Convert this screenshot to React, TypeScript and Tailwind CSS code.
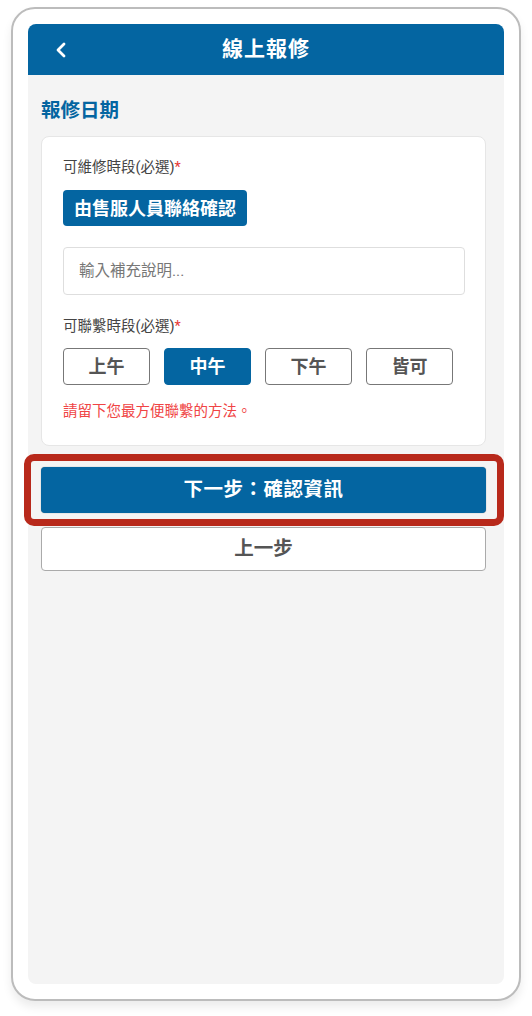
import { useState } from "react";

const slots = ["上午", "中午", "下午", "皆可"];

export default function App() {
  const [slot, setSlot] = useState("中午");

  return (
    <div
      className="min-h-screen bg-white pt-[7px] pl-[11px]"
      style={{ fontFamily: '"Roboto", "Noto Sans CJK TC", sans-serif' }}
    >
      <div className="w-[510px] h-[994px] rounded-[24px] border-2 border-[#bcbcbc] bg-white p-[15px] shadow-[0_6px_10px_rgba(0,0,0,0.08)]">
        <div className="flex h-full flex-col">
          {/* Header */}
          <div className="relative flex h-[51px] shrink-0 items-center justify-center rounded-t-[8px] bg-[#0465a1]">
            <button className="absolute left-[25px] top-[16px] flex h-[20px] w-[16px] items-center justify-center">
              <svg width="12" height="16" viewBox="0 0 12 16" fill="none">
                <polyline
                  points="9,2 3,8 9,14"
                  stroke="white"
                  strokeWidth="2.8"
                  strokeLinecap="round"
                  strokeLinejoin="round"
                />
              </svg>
            </button>
            <h1 className="text-[21px] font-bold tracking-[1px] text-white">線上報修</h1>
          </div>

          {/* Content */}
          <div className="flex-1 rounded-b-[8px] bg-[#f4f4f4] pl-[13px] pr-[18px] pt-[24px]">
            <h2 className="text-[19.5px] font-bold leading-[24px] text-[#0465a1]">報修日期</h2>

            <div className="mt-[13px] rounded-[8px] border border-[#e6e6e6] bg-white pl-[21px] pr-[20px] pt-[21px] pb-[23px]">
              <p className="text-[14.5px] leading-[20px] text-[#444]">
                可維修時段(必選)<span className="text-[#e53935]">*</span>
              </p>
              <div className="mt-[12px] inline-flex h-[36px] items-center rounded-[4px] bg-[#0465a1] px-[11px] text-[18px] font-bold text-white">
                由售服人員聯絡確認
              </div>

              <input
                placeholder="輸入補充說明..."
                className="mt-[21px] block h-[48px] w-full rounded-[4px] border border-[#dedede] px-[15px] text-[15.5px] text-[#333] outline-none placeholder:text-[#777]"
              />

              <p className="mt-[22px] text-[14.5px] leading-[20px] text-[#444]">
                可聯繫時段(必選)<span className="text-[#e53935]">*</span>
              </p>
              <div className="mt-[11px] flex gap-[14px]">
                {slots.map((s) => (
                  <button
                    key={s}
                    onClick={() => setSlot(s)}
                    className={
                      slot === s
                        ? "h-[37px] w-[87px] rounded-[4px] border-[1.5px] border-[#0465a1] bg-[#0465a1] text-[18px] font-bold text-white"
                        : "h-[37px] w-[87px] rounded-[4px] border-[1.5px] border-[#777] bg-white text-[18px] font-bold text-[#555]"
                    }
                  >
                    {s}
                  </button>
                ))}
              </div>

              <p className="mt-[17px] text-[14.5px] leading-[20px] text-[#f04444]">請留下您最方便聯繫的方法。</p>
            </div>

            <div className="relative mt-[21px]">
              <button className="flex h-[46px] w-full items-center justify-center rounded-[4px] bg-[#0465a1] text-[19.5px] font-bold tracking-[0.5px] text-white shadow-[0_0_1px_rgba(0,0,0,0.5)]">
                下一步：確認資訊
              </button>
              <div className="pointer-events-none absolute -top-[13px] -bottom-[13px] -left-[17px] -right-[18px] rounded-[10px] border-[7px] border-[#b8291b]" />
            </div>

            <button className="mt-[14px] flex h-[44px] w-full items-center justify-center rounded-[4px] border border-[#aaa] bg-white text-[19.5px] font-bold text-[#555]">
              上一步
            </button>
          </div>
        </div>
      </div>
    </div>
  );
}
